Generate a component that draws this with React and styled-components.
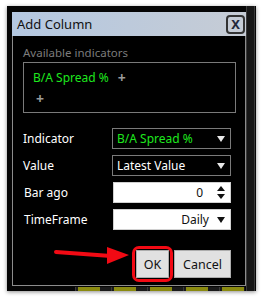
import styled, { createGlobalStyle } from 'styled-components';

const GlobalStyle = createGlobalStyle`
  html, body {
    margin: 0;
    padding: 0;
    background: #fff;
  }
  * { box-sizing: border-box; }
`;

const Frame = styled.div`
  width: 262px;
  height: 299px;
  padding: 6px 6px 8px 7px;
  background: #fff;
  font-family: 'Noto Sans', 'Open Sans', sans-serif;
`;

const Backdrop = styled.div`
  position: relative;
  width: 249px;
  height: 285px;
  padding: 6px 0 0 5px;
  background-color: #050505;
  background-image:
    linear-gradient(to right, transparent 239px, #3a3a3a 239px, #3a3a3a 240px, #161616 240px, #161616 247px, #3a3a3a 247px, #3a3a3a 248px, transparent 248px);
  box-shadow: 0 1px 4px rgba(0, 0, 0, 0.45);
  display: flex;
  flex-direction: column;
`;

const BottomCells = styled.div`
  height: 4px;
  margin-top: 1px;
  margin-left: 63px;
  width: 170px;
  background: repeating-linear-gradient(to right, #3a3a3a 0, #3a3a3a 1px, #1a1a1a 1px, #1a1a1a 3px, #8a8a10 3px, #8a8a10 25px, #1a1a1a 25px, #1a1a1a 36px);
`;

const Dialog = styled.div`
  width: 234px;
  height: 275px;
  border: 1px solid #8c8c8c;
  border-top: none;
  background: #000;
  display: flex;
  flex-direction: column;
`;

const TitleBar = styled.div`
  height: 24px;
  margin: 0 -1px;
  padding: 0 1px 0 5px;
  background: linear-gradient(to right, #b4c8e1, #c6ccd5);
  display: flex;
  align-items: center;
  justify-content: space-between;
  color: #111;
  font-size: 13px;
`;

const CloseButton = styled.div`
  width: 19px;
  height: 19px;
  border: 2px solid #333;
  border-radius: 4px;
  display: flex;
  align-items: center;
  justify-content: center;
  font-weight: 700;
  font-size: 13px;
  color: #23283a;
  line-height: 1;
`;

const Body = styled.div`
  position: relative;
  flex: 1;
  padding: 9px 9px 0 10px;
  display: flex;
  flex-direction: column;
`;

const SectionLabel = styled.div`
  color: #7c7c7c;
  font-size: 11.5px;
  line-height: 16px;
`;

const IndicatorBox = styled.div`
  margin-top: 1px;
  height: 51px;
  border: 1px solid #7a7a7a;
  padding: 5px 0 0 9px;
  display: flex;
  flex-direction: column;
  gap: 3px;
`;

const ChipRow = styled.div`
  display: flex;
  align-items: center;
  gap: 9px;
  height: 18px;
  color: #1ee81e;
  font-size: 12px;
`;

const Plus = styled.span`
  color: #9a9a9a;
  font-weight: 700;
  font-size: 14px;
  padding-left: ${p => p.$indent || 0}px;
`;

const Form = styled.div`
  margin-top: 15px;
  display: grid;
  grid-template-columns: 89px 119px;
  row-gap: 6px;
  align-items: center;
`;

const Label = styled.div`
  color: #fff;
  font-size: 12px;
  padding-left: ${p => p.$indent || 0}px;
`;

const Select = styled.div`
  height: 21px;
  border: 1px solid ${p => (p.$light ? '#d0d0d0' : '#7a7a7a')};
  background: ${p => (p.$light ? '#fff' : '#000')};
  color: ${p => p.$color || '#fff'};
  font-size: 12px;
  display: flex;
  align-items: center;
  justify-content: ${p => (p.$right ? 'flex-end' : 'space-between')};
  gap: 8px;
  padding: 0 5px 0 4px;
  margin-left: ${p => (p.$light ? 1 : 0)}px;
`;

const Caret = styled.span`
  width: 0;
  height: 0;
  border-left: 4.5px solid transparent;
  border-right: 4.5px solid transparent;
  border-top: 6px solid ${p => p.$dark ? '#111' : '#e8e8e8'};
`;

const Spinner = styled.div`
  display: flex;
  flex-direction: column;
  gap: 3px;
  margin-left: 6px;
`;

const Arrow = styled.span`
  width: 0;
  height: 0;
  border-left: 4px solid transparent;
  border-right: 4px solid transparent;
  ${p => (p.$up ? 'border-bottom: 5px solid #111;' : 'border-top: 5px solid #111;')}
`;

const Buttons = styled.div`
  margin-top: 16px;
  display: flex;
  justify-content: flex-end;
  align-items: center;
  gap: 1px;
  padding-right: 5px;
`;

const Highlight = styled.div`
  border: 3.5px solid #f20a14;
  border-radius: 7px;
  padding: 1px;
`;

const Button = styled.div`
  width: ${p => p.$w}px;
  height: 28px;
  background: #e1e1e1;
  border: 1px solid #adadad;
  color: #111;
  font-size: 12.5px;
  display: flex;
  align-items: center;
  justify-content: center;
`;

const Pointer = styled.svg`
  position: absolute;
  left: 38px;
  top: 211px;
`;

export default function App() {
  return (
    <Frame>
      <GlobalStyle />
      <Backdrop>
        <Dialog>
          <TitleBar>
            <span>Add Column</span>
            <CloseButton>X</CloseButton>
          </TitleBar>
          <Body>
            <SectionLabel>Available indicators</SectionLabel>
            <IndicatorBox>
              <ChipRow>
                B/A Spread %
                <Plus>+</Plus>
              </ChipRow>
              <ChipRow>
                <Plus $indent={3}>+</Plus>
              </ChipRow>
            </IndicatorBox>

            <Form>
              <Label>Indicator</Label>
              <Select $color="#1ee81e">
                B/A Spread %
                <Caret />
              </Select>
              <Label>Value</Label>
              <Select>
                Latest Value
                <Caret />
              </Select>
              <Label $indent={1}>Bar ago</Label>
              <Select $light $right $color="#111">
                0
                <Spinner>
                  <Arrow $up />
                  <Arrow />
                </Spinner>
              </Select>
              <Label $indent={1}>TimeFrame</Label>
              <Select $light $right $color="#111">
                Daily
                <Caret $dark />
              </Select>
            </Form>

            <Buttons>
              <Highlight>
                <Button $w={33}>OK</Button>
              </Highlight>
              <Button $w={57}>Cancel</Button>
            </Buttons>

            <Pointer width="80" height="24" viewBox="0 0 80 24">
              <line x1="5" y1="5" x2="60" y2="9" stroke="#f20a14" strokeWidth="4" strokeLinecap="round" />
              <polygon points="56,0 78,8 56,17" fill="#f20a14" />
            </Pointer>
          </Body>
        </Dialog>
        <BottomCells />
      </Backdrop>
    </Frame>
  );
}
